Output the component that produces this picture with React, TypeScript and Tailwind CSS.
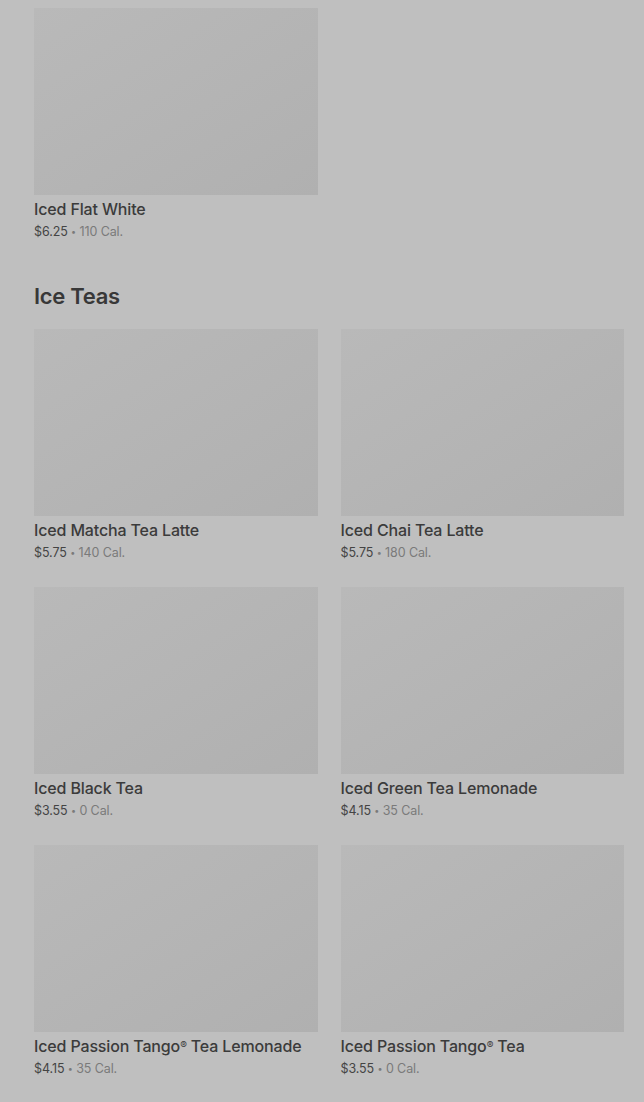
import React from 'react';

type Item = { name: React.ReactNode; price: string; cal: string };

const Reg = () => <sup className="text-[10px] leading-none font-normal relative -top-[3px]">®</sup>;

const teas: Item[] = [
  { name: 'Iced Matcha Tea Latte', price: '$5.75', cal: '140 Cal.' },
  { name: 'Iced Chai Tea Latte', price: '$5.75', cal: '180 Cal.' },
  { name: 'Iced Black Tea', price: '$3.55', cal: '0 Cal.' },
  { name: 'Iced Green Tea Lemonade', price: '$4.15', cal: '35 Cal.' },
  { name: <>Iced Passion Tango<Reg /> Tea Lemonade</>, price: '$4.15', cal: '35 Cal.' },
  { name: <>Iced Passion Tango<Reg /> Tea</>, price: '$3.55', cal: '0 Cal.' },
];

const MenuCard: React.FC<{ item: Item }> = ({ item }) => (
  <div className="flex flex-col">
    <div className="h-[187px] w-full bg-gradient-to-br from-[#b9b9b9] to-[#b0b0b0]" />
    <p className="mt-[2px] h-6 leading-6 text-[16px] font-medium text-[#3b3b3b] tracking-[-0.15px] whitespace-nowrap">{item.name}</p>
    <p className="mt-px h-5 leading-5 text-[12.5px] tracking-[-0.1px]">
      <span className="text-[#444]">{item.price}</span>
      <span className="text-[#7a7a7a]"> <span className="text-[9px] leading-none relative -top-px">•</span> {item.cal}</span>
    </p>
  </div>
);

export default function App() {
  return (
    <div className="min-h-[1102px] bg-[#bfbfbf] pl-[34px] pr-[20px] pt-2 pb-10 font-['Inter',sans-serif]">
      <div className="grid grid-cols-2 gap-x-[23px]">
        <MenuCard item={{ name: 'Iced Flat White', price: '$6.25', cal: '110 Cal.' }} />
      </div>

      <h2 className="mt-[38px] mb-[17px] text-[22px] leading-8 font-semibold text-[#383838] tracking-[-0.3px]">Ice Teas</h2>

      <div className="grid grid-cols-2 gap-x-[23px] gap-y-6">
        {teas.map((t, i) => (
          <MenuCard key={i} item={t} />
        ))}
      </div>
    </div>
  );
}
